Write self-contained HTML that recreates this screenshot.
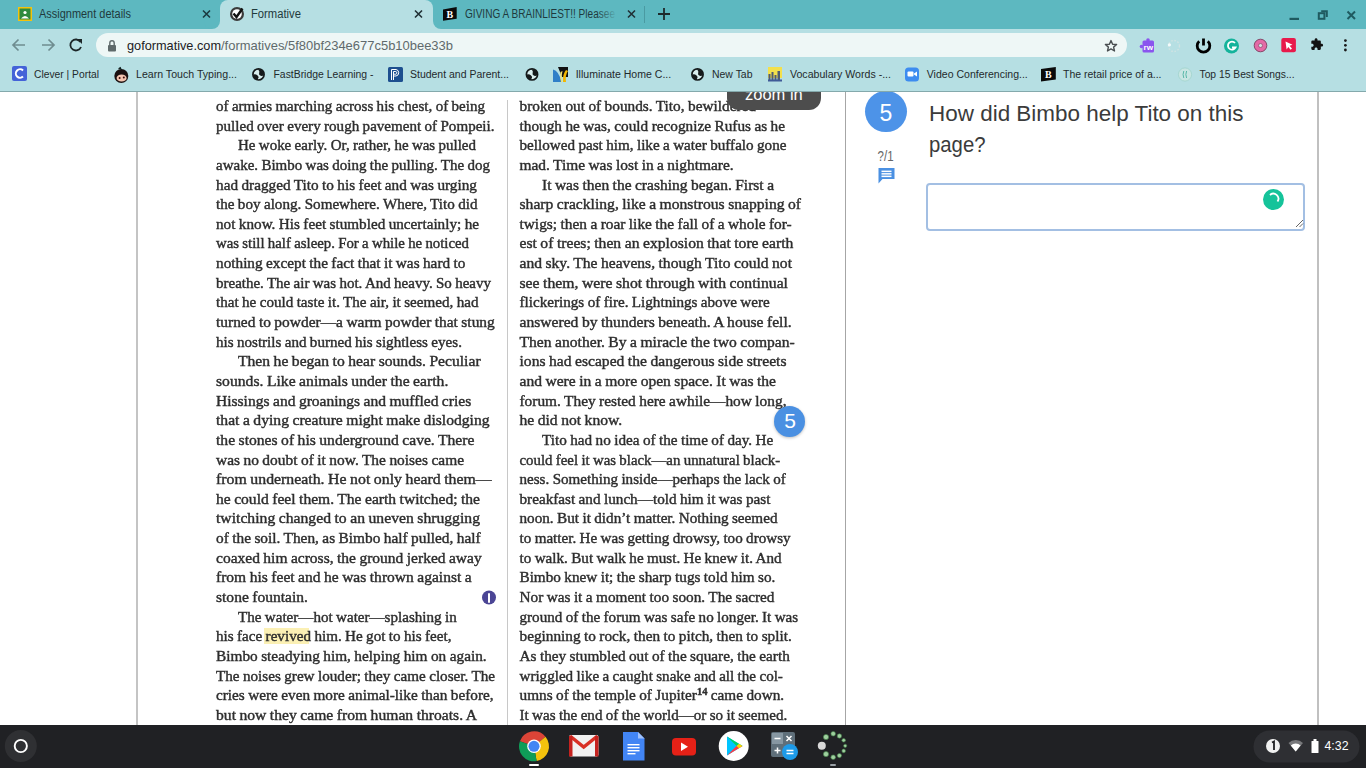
<!DOCTYPE html>
<html><head><meta charset="utf-8"><title>Formative</title>
<style>
html,body{margin:0;padding:0;}
body{width:1366px;height:768px;overflow:hidden;position:relative;background:#fff;font-family:"Liberation Sans",sans-serif;}
.a{position:absolute;}
svg{position:absolute;left:0;top:0;}
</style></head><body>

<!-- ============ CHROME FRAME ============ -->
<div class="a" style="left:0;top:0;width:1366px;height:29px;background:#5db8c0"></div>
<div class="a" style="left:0;top:29px;width:1366px;height:62px;background:#b6dfe3"></div>
<div class="a" style="left:0;top:91px;width:1366px;height:1px;background:#84a9ac"></div>
<!-- active tab -->
<div class="a" style="left:220px;top:0;width:213px;height:29px;background:#b6dfe3;border-radius:8px 8px 0 0"></div>
<div class="a" style="left:212px;top:21px;width:8px;height:8px;background:#b6dfe3"></div>
<div class="a" style="left:204px;top:13px;width:16px;height:16px;border-radius:50%;background:#5db8c0"></div>
<div class="a" style="left:433px;top:21px;width:8px;height:8px;background:#b6dfe3"></div>
<div class="a" style="left:433px;top:13px;width:16px;height:16px;border-radius:50%;background:#5db8c0"></div>
<!-- omnibox -->
<div class="a" style="left:96px;top:33px;width:1031px;height:24px;background:#eef7f6;border-radius:12px"></div>

<svg width="1366" height="92" viewBox="0 0 1366 92" style="font-family:'Liberation Sans',sans-serif">
  <!-- tab 1 -->
  <rect x="18" y="7" width="14" height="14" fill="#f4c20d"/>
  <rect x="19.5" y="8.5" width="11" height="11" fill="#2f8b3f"/>
  <circle cx="25" cy="12.5" r="1.6" fill="#fff"/>
  <path d="M21 18.5 Q25 13.5 29 18.5 Z" fill="#fff"/>
  <text x="39" y="18" font-size="12.5" fill="#1f3a3d" textLength="92" lengthAdjust="spacingAndGlyphs">Assignment details</text>
  <path d="M203 10.5 L210 17.5 M210 10.5 L203 17.5" stroke="#1c3a40" stroke-width="1.6"/>
  <!-- tab 2 (active) -->
  <circle cx="237" cy="14" r="7" fill="#3a3a3a"/>
  <circle cx="237" cy="14" r="4.8" fill="#fff"/>
  <path d="M233.5 13.5 L236.5 17 L242.5 8.5" stroke="#111" stroke-width="2.4" fill="none"/>
  <text x="251" y="18" font-size="12.5" fill="#1f3a3d" textLength="50" lengthAdjust="spacingAndGlyphs">Formative</text>
  <path d="M415 10.5 L422 17.5 M422 10.5 L415 17.5" stroke="#203035" stroke-width="1.6"/>
  <!-- tab 3 -->
  <path d="M443 9.5 L456.7 7 L456.7 18.8 L443 20.8 Z" fill="#0a0a0a"/>
  <text x="446.5" y="17.8" font-size="10" font-weight="bold" fill="#fff" font-family="Liberation Serif">B</text>
  <text x="465" y="18" font-size="12.5" fill="#1f3a3d" textLength="150" lengthAdjust="spacingAndGlyphs">GIVING A BRAINLIEST!! Pleasee</text>
  <defs><linearGradient id="fd" x1="0" x2="1"><stop offset="0" stop-color="#5db8c0" stop-opacity="0"/><stop offset="1" stop-color="#5db8c0" stop-opacity="1"/></linearGradient></defs>
  <rect x="597" y="6" width="20" height="16" fill="url(#fd)"/>
  <path d="M628 10.5 L635 17.5 M635 10.5 L628 17.5" stroke="#203035" stroke-width="1.6"/>
  <rect x="644" y="6" width="1" height="17" fill="#4a9aa2"/>
  <path d="M664 8 V20 M658 14 H670" stroke="#1d2a2c" stroke-width="1.8"/>
  <!-- window controls -->
  <rect x="1289.5" y="17.8" width="9.5" height="2.2" fill="#1f5a60"/>
  <rect x="1318.8" y="13.2" width="5.6" height="5.6" fill="none" stroke="#1f5a60" stroke-width="2"/>
  <path d="M1321.2 11.3 H1326.8 V16.9" fill="none" stroke="#1f5a60" stroke-width="2"/>
  <path d="M1347.5 11.5 L1355 19 M1355 11.5 L1347.5 19" stroke="#1f5a60" stroke-width="2"/>

  <!-- toolbar nav -->
  <path d="M13 45 H25 M18.5 39.5 L13 45 L18.5 50.5" fill="none" stroke="#6f8d90" stroke-width="1.7"/>
  <path d="M42 45 H54 M48.5 39.5 L54 45 L48.5 50.5" fill="none" stroke="#6f8d90" stroke-width="1.7"/>
  <path d="M80.5 42 A5.5 5.5 0 1 0 81 47" fill="none" stroke="#1c2628" stroke-width="1.8"/>
  <path d="M77 39 L82 39 L82 44 Z" fill="#1c2628"/>
  <!-- lock -->
  <rect x="108" y="45" width="8" height="6.5" rx="1" fill="#5f6a6b"/>
  <path d="M109.8 45.5 V43 A2.2 2.2 0 0 1 114.2 43 V45.5" fill="none" stroke="#5f6a6b" stroke-width="1.4"/>
  <text x="127" y="50" font-size="13" fill="#202124" textLength="94" lengthAdjust="spacingAndGlyphs">goformative.com</text>
  <text x="221" y="50" font-size="13" fill="#5f6a6c" textLength="232" lengthAdjust="spacingAndGlyphs">/formatives/5f80bf234e677c5b10bee33b</text>
  <!-- star -->
  <path d="M1111 40.6 L1112.6 44.2 L1116.6 44.5 L1113.6 47.1 L1114.5 51 L1111 48.9 L1107.5 51 L1108.4 47.1 L1105.4 44.5 L1109.4 44.2 Z" fill="none" stroke="#4a4f52" stroke-width="1.4" stroke-linejoin="round"/>
  <!-- extensions -->
  <rect x="1142.5" y="40.5" width="11.5" height="12" rx="1.5" fill="#8a55ee"/>
  <circle cx="1148" cy="40" r="1.8" fill="#8a55ee"/>
  <circle cx="1141.5" cy="46.5" r="1.8" fill="#8a55ee"/>
  <text x="1143.6" y="49.6" font-size="7.5" font-weight="bold" fill="#fff" textLength="9.5" lengthAdjust="spacingAndGlyphs">rw</text>
  <circle cx="1174" cy="46" r="5.5" fill="none" stroke="#cfe3e3" stroke-width="1.4" stroke-dasharray="1.6 1.6"/><circle cx="1169.4" cy="44.8" r="1.6" fill="#f4fbfb"/>
  <path d="M1199.2 41.2 A6.3 6.3 0 1 0 1207.8 41.2" fill="none" stroke="#000" stroke-width="2.8"/>
  <path d="M1203.5 38.5 V45.5" stroke="#000" stroke-width="2.8"/>
  <circle cx="1231.5" cy="46" r="7.5" fill="#14b39b"/>
  <path d="M1235 43 A4 4 0 1 0 1235.5 47.5 H1232" fill="none" stroke="#fff" stroke-width="1.8"/>
  <circle cx="1260.5" cy="45.5" r="6.3" fill="#e36aa6" stroke="#7d3d5e" stroke-width="0.9"/>
  <circle cx="1260.5" cy="45.5" r="2" fill="#d6dfe2" stroke="#7d3d5e" stroke-width="0.6"/>
  <rect x="1281.3" y="38" width="14.6" height="14.2" rx="2" fill="#e8194b"/>
  <path d="M1285.5 41.5 L1292.5 44.8 L1289.6 45.8 L1292 48.6 L1290.6 49.8 L1288.3 47 L1286.6 49.5 Z" fill="#fff"/>
  <path transform="translate(1310.2 37.6) scale(0.56)" d="M20.5 11H19V7c0-1.1-.9-2-2-2h-4V3.5C13 2.12 11.88 1 10.5 1S8 2.12 8 3.5V5H4c-1.1 0-1.99.9-1.99 2v3.8H3.5c1.490 0 2.7 1.21 2.7 2.7s-1.21 2.7-2.7 2.7H2V20c0 1.1.9 2 2 2h3.8v-1.5c0-1.49 1.21-2.7 2.7-2.7 1.49 0 2.7 1.21 2.7 2.7V22H17c1.1 0 2-.9 2-2v-4h1.5c1.38 0 2.5-1.12 2.5-2.5S21.88 11 20.5 11z" fill="#111"/>
  <circle cx="1345.4" cy="40.6" r="1.4" fill="#1a1a1a"/>
  <circle cx="1345.4" cy="45.3" r="1.4" fill="#1a1a1a"/>
  <circle cx="1345.4" cy="50" r="1.4" fill="#1a1a1a"/>

  <!-- bookmarks -->
  
  <rect x="12" y="66" width="15" height="15" rx="2" fill="#4463d8"/>
  <path d="M23 70.5 A4.2 4.2 0 1 0 23 76.5" fill="none" stroke="#fff" stroke-width="2"/>
  <text x="34" y="78" font-size="11.7" fill="#1f2a2c" textLength="65" lengthAdjust="spacingAndGlyphs">Clever | Portal</text>
  <circle cx="121.3" cy="76" r="7" fill="#1a1010"/>
  <path d="M118 68.5 L120.5 66.8 L122 70 Z" fill="#102020"/>
  <ellipse cx="121.6" cy="78" rx="5" ry="3.6" fill="#f3c4b0"/>
  <circle cx="119.6" cy="77.9" r="1" fill="#3a0c08"/>
  <circle cx="123.8" cy="77.6" r="1" fill="#3a0c08"/>
  <text x="136" y="78" font-size="11.7" fill="#1f2a2c" textLength="101" lengthAdjust="spacingAndGlyphs">Learn Touch Typing...</text>
  <g transform="translate(258.5 74.4)"><circle cx="0" cy="0" r="5.6" fill="#d9eeee" stroke="#151a1b" stroke-width="1.7"/>
  <path d="M-1.2 -5.2 Q1.6 -3.6 0.6 -1.4 Q0 0.6 2.2 1.4 Q4.2 1.8 5.4 0.6 L5.2 -2.5 Q3.5 -5.2 -1.2 -5.2 Z" fill="#151a1b"/>
  <path d="M-5.4 0.2 Q-3 -0.6 -1.2 0.8 Q0.4 2.2 0 3.4 Q-0.6 4.6 -1 5.4 Q-4.2 4.6 -5.4 1.5 Z" fill="#151a1b"/></g>
  <text x="273.5" y="78" font-size="11.7" fill="#1f2a2c" textLength="100" lengthAdjust="spacingAndGlyphs">FastBridge Learning -</text>
  <rect x="388" y="67" width="15" height="15" rx="1.5" fill="#1d4f8f"/>
  <path d="M391.5 80 V69.5 H396 A3.3 3.3 0 0 1 396 76 H393.5" fill="none" stroke="#fff" stroke-width="1"/>
  <path d="M393.5 80 V71.5 H395.8 A1.4 1.4 0 0 1 395.8 74.2 H393.5" fill="none" stroke="#fff" stroke-width="1"/>
  <text x="410" y="78" font-size="11.7" fill="#1f2a2c" textLength="99" lengthAdjust="spacingAndGlyphs">Student and Parent...</text>
  <g transform="translate(532 74.4)"><circle cx="0" cy="0" r="5.6" fill="#d9eeee" stroke="#151a1b" stroke-width="1.7"/>
  <path d="M-1.2 -5.2 Q1.6 -3.6 0.6 -1.4 Q0 0.6 2.2 1.4 Q4.2 1.8 5.4 0.6 L5.2 -2.5 Q3.5 -5.2 -1.2 -5.2 Z" fill="#151a1b"/>
  <path d="M-5.4 0.2 Q-3 -0.6 -1.2 0.8 Q0.4 2.2 0 3.4 Q-0.6 4.6 -1 5.4 Q-4.2 4.6 -5.4 1.5 Z" fill="#151a1b"/></g>
  <path d="M553 67 L568 67 L568 82 L553 82 Z" fill="#b6dfe3"/>
  <path d="M558 67 H568 V77 H562 Z" fill="#111"/>
  <path d="M553 69.5 Q559 71 561.5 82 H553 Z" fill="#2f7fc8"/>
  <path d="M563 82 Q562.5 74 566 70 L568 71 Q565 75 566 82 Z" fill="#f2b600"/>
  <path d="M560.5 72 L562.5 71 Q561 76 562 82 H561 Q560 77 560.5 72 Z" fill="#f7e26a"/>
  <text x="575.7" y="78" font-size="11.7" fill="#1f2a2c" textLength="95.5" lengthAdjust="spacingAndGlyphs">Illuminate Home C...</text>
  <g transform="translate(697.5 74.4)"><circle cx="0" cy="0" r="5.6" fill="#d9eeee" stroke="#151a1b" stroke-width="1.7"/>
  <path d="M-1.2 -5.2 Q1.6 -3.6 0.6 -1.4 Q0 0.6 2.2 1.4 Q4.2 1.8 5.4 0.6 L5.2 -2.5 Q3.5 -5.2 -1.2 -5.2 Z" fill="#151a1b"/>
  <path d="M-5.4 0.2 Q-3 -0.6 -1.2 0.8 Q0.4 2.2 0 3.4 Q-0.6 4.6 -1 5.4 Q-4.2 4.6 -5.4 1.5 Z" fill="#151a1b"/></g>
  <text x="712" y="78" font-size="11.7" fill="#1f2a2c" textLength="40.5" lengthAdjust="spacingAndGlyphs">New Tab</text>
  <rect x="768" y="67" width="14" height="11" fill="#f3e04c"/>
  <path d="M768.5 81 V74 h2 v7 M771.5 81 V72 h2 v9 M774.5 81 V75 h2 v6 M777.5 81 V71 h2.5 v10" fill="#4f5b73"/>
  <rect x="768" y="79.5" width="14" height="2" fill="#3f5a98"/>
  <text x="790" y="78" font-size="11.7" fill="#1f2a2c" textLength="101" lengthAdjust="spacingAndGlyphs">Vocabulary Words -...</text>
  <rect x="905" y="67.5" width="14" height="14" rx="3.5" fill="#3d8cf0"/>
  <rect x="907.5" y="71.5" width="6" height="5" rx="1" fill="#fff"/>
  <path d="M914 73.5 L917 71.5 V76.5 L914 74.5 Z" fill="#fff"/>
  <text x="926.8" y="78" font-size="11.7" fill="#1f2a2c" textLength="101" lengthAdjust="spacingAndGlyphs">Video Conferencing...</text>
  <path d="M1041 69 L1055.8 67 L1055.8 79.6 L1041 81.6 Z" fill="#0a0a0a"/>
  <text x="1045" y="78.3" font-size="10" font-weight="bold" fill="#fff" font-family="Liberation Serif">B</text>
  <text x="1063" y="78" font-size="11.7" fill="#1f2a2c" textLength="98.5" lengthAdjust="spacingAndGlyphs">The retail price of a...</text>
  <circle cx="1185" cy="74.5" r="6.6" fill="#c9e6e3" stroke="#9fd3cc" stroke-width="0.8"/>
  <path d="M1183.8 71 Q1182.3 74.5 1183.8 78 M1186.6 71 Q1185.1 74.5 1186.6 78" fill="none" stroke="#5ab8a8" stroke-width="1"/>
  <text x="1199.5" y="78" font-size="11.7" fill="#1f2a2c" textLength="95" lengthAdjust="spacingAndGlyphs">Top 15 Best Songs...</text>
</svg>

<!-- ============ PAGE ============ -->
<div class="a" style="left:136px;top:92px;width:2px;height:633px;background:#c4c4c4"></div>
<div class="a" style="left:845px;top:92px;width:1px;height:633px;background:#a6a6a6"></div>
<div class="a" style="left:1317px;top:92px;width:2px;height:633px;background:#c0c0c0"></div>
<div class="a" style="left:507px;top:100px;width:1px;height:625px;background:#c8c8c8"></div>
<!-- highlight revived -->
<div class="a" style="left:264px;top:628px;width:45px;height:16px;background:#fbf0b4"></div>

<svg width="1366" height="768" viewBox="0 0 1366 768" style="filter:blur(0.35px)">
<g font-family="Liberation Serif" font-size="15.3" word-spacing="-0.4" fill="#2e2e2e" stroke="#2e2e2e" stroke-width="0.42">
<text x="216" y="111.00" textLength="269.0" lengthAdjust="spacingAndGlyphs">of armies marching across his chest, of being</text>
<text x="216" y="130.64" textLength="278.5" lengthAdjust="spacingAndGlyphs">pulled over every rough pavement of Pompeii.</text>
<text x="238" y="150.28" textLength="238.0" lengthAdjust="spacingAndGlyphs">He woke early. Or, rather, he was pulled</text>
<text x="216" y="169.92" textLength="274.0" lengthAdjust="spacingAndGlyphs">awake. Bimbo was doing the pulling. The dog</text>
<text x="216" y="189.56" textLength="261.0" lengthAdjust="spacingAndGlyphs">had dragged Tito to his feet and was urging</text>
<text x="216" y="209.20" textLength="261.5" lengthAdjust="spacingAndGlyphs">the boy along. Somewhere. Where, Tito did</text>
<text x="216" y="228.84" textLength="263.0" lengthAdjust="spacingAndGlyphs">not know. His feet stumbled uncertainly; he</text>
<text x="216" y="248.48" textLength="253.0" lengthAdjust="spacingAndGlyphs">was still half asleep. For a while he noticed</text>
<text x="216" y="268.12" textLength="249.4" lengthAdjust="spacingAndGlyphs">nothing except the fact that it was hard to</text>
<text x="216" y="287.76" textLength="275.0" lengthAdjust="spacingAndGlyphs">breathe. The air was hot. And heavy. So heavy</text>
<text x="216" y="307.40" textLength="262.5" lengthAdjust="spacingAndGlyphs">that he could taste it. The air, it seemed, had</text>
<text x="216" y="327.04" textLength="278.8" lengthAdjust="spacingAndGlyphs">turned to powder—a warm powder that stung</text>
<text x="216" y="346.68" textLength="245.9" lengthAdjust="spacingAndGlyphs">his nostrils and burned his sightless eyes.</text>
<text x="238" y="366.32" textLength="242.6" lengthAdjust="spacingAndGlyphs">Then he began to hear sounds. Peculiar</text>
<text x="216" y="385.96" textLength="232.3" lengthAdjust="spacingAndGlyphs">sounds. Like animals under the earth.</text>
<text x="216" y="405.60" textLength="255.2" lengthAdjust="spacingAndGlyphs">Hissings and groanings and muffled cries</text>
<text x="216" y="425.24" textLength="273.6" lengthAdjust="spacingAndGlyphs">that a dying creature might make dislodging</text>
<text x="216" y="444.88" textLength="258.4" lengthAdjust="spacingAndGlyphs">the stones of his underground cave. There</text>
<text x="216" y="464.52" textLength="248.0" lengthAdjust="spacingAndGlyphs">was no doubt of it now. The noises came</text>
<text x="216" y="484.16" textLength="275.7" lengthAdjust="spacingAndGlyphs">from underneath. He not only heard them—</text>
<text x="216" y="503.80" textLength="264.0" lengthAdjust="spacingAndGlyphs">he could feel them. The earth twitched; the</text>
<text x="216" y="523.44" textLength="264.0" lengthAdjust="spacingAndGlyphs">twitching changed to an uneven shrugging</text>
<text x="216" y="543.08" textLength="264.6" lengthAdjust="spacingAndGlyphs">of the soil. Then, as Bimbo half pulled, half</text>
<text x="216" y="562.72" textLength="265.7" lengthAdjust="spacingAndGlyphs">coaxed him across, the ground jerked away</text>
<text x="216" y="582.36" textLength="255.7" lengthAdjust="spacingAndGlyphs">from his feet and he was thrown against a</text>
<text x="216" y="602.00" textLength="92.0" lengthAdjust="spacingAndGlyphs">stone fountain.</text>
<text x="238" y="621.64" textLength="218.7" lengthAdjust="spacingAndGlyphs">The water—hot water—splashing in</text>
<text x="216" y="641.28" textLength="235.5" lengthAdjust="spacingAndGlyphs">his face revived him. He got to his feet,</text>
<text x="216" y="660.92" textLength="270.7" lengthAdjust="spacingAndGlyphs">Bimbo steadying him, helping him on again.</text>
<text x="216" y="680.56" textLength="279.0" lengthAdjust="spacingAndGlyphs">The noises grew louder; they came closer. The</text>
<text x="216" y="700.20" textLength="277.6" lengthAdjust="spacingAndGlyphs">cries were even more animal-like than before,</text>
<text x="216" y="719.84" textLength="261.0" lengthAdjust="spacingAndGlyphs">but now they came from human throats. A</text>
<text x="519.5" y="111.00" textLength="236.5" lengthAdjust="spacingAndGlyphs">broken out of bounds. Tito, bewildered</text>
<text x="519.5" y="130.64" textLength="265.5" lengthAdjust="spacingAndGlyphs">though he was, could recognize Rufus as he</text>
<text x="519.5" y="150.28" textLength="267.0" lengthAdjust="spacingAndGlyphs">bellowed past him, like a water buffalo gone</text>
<text x="519.5" y="169.92" textLength="214.2" lengthAdjust="spacingAndGlyphs">mad. Time was lost in a nightmare.</text>
<text x="542" y="189.56" textLength="232.0" lengthAdjust="spacingAndGlyphs">It was then the crashing began. First a</text>
<text x="519.5" y="209.20" textLength="281.5" lengthAdjust="spacingAndGlyphs">sharp crackling, like a monstrous snapping of</text>
<text x="519.5" y="228.84" textLength="272.2" lengthAdjust="spacingAndGlyphs">twigs; then a roar like the fall of a whole for-</text>
<text x="519.5" y="248.48" textLength="273.8" lengthAdjust="spacingAndGlyphs">est of trees; then an explosion that tore earth</text>
<text x="519.5" y="268.12" textLength="272.5" lengthAdjust="spacingAndGlyphs">and sky. The heavens, though Tito could not</text>
<text x="519.5" y="287.76" textLength="268.5" lengthAdjust="spacingAndGlyphs">see them, were shot through with continual</text>
<text x="519.5" y="307.40" textLength="250.3" lengthAdjust="spacingAndGlyphs">flickerings of fire. Lightnings above were</text>
<text x="519.5" y="327.04" textLength="272.2" lengthAdjust="spacingAndGlyphs">answered by thunders beneath. A house fell.</text>
<text x="519.5" y="346.68" textLength="275.3" lengthAdjust="spacingAndGlyphs">Then another. By a miracle the two compan-</text>
<text x="519.5" y="366.32" textLength="267.0" lengthAdjust="spacingAndGlyphs">ions had escaped the dangerous side streets</text>
<text x="519.5" y="385.96" textLength="256.5" lengthAdjust="spacingAndGlyphs">and were in a more open space. It was the</text>
<text x="519.5" y="405.60" textLength="267.0" lengthAdjust="spacingAndGlyphs">forum. They rested here awhile—how long,</text>
<text x="519.5" y="425.24" textLength="102.7" lengthAdjust="spacingAndGlyphs">he did not know.</text>
<text x="542" y="444.88" textLength="231.3" lengthAdjust="spacingAndGlyphs">Tito had no idea of the time of day. He</text>
<text x="519.5" y="464.52" textLength="260.7" lengthAdjust="spacingAndGlyphs">could feel it was black—an unnatural black-</text>
<text x="519.5" y="484.16" textLength="266.3" lengthAdjust="spacingAndGlyphs">ness. Something inside—perhaps the lack of</text>
<text x="519.5" y="503.80" textLength="250.9" lengthAdjust="spacingAndGlyphs">breakfast and lunch—told him it was past</text>
<text x="519.5" y="523.44" textLength="258.0" lengthAdjust="spacingAndGlyphs">noon. But it didn’t matter. Nothing seemed</text>
<text x="519.5" y="543.08" textLength="271.1" lengthAdjust="spacingAndGlyphs">to matter. He was getting drowsy, too drowsy</text>
<text x="519.5" y="562.72" textLength="262.1" lengthAdjust="spacingAndGlyphs">to walk. But walk he must. He knew it. And</text>
<text x="519.5" y="582.36" textLength="255.8" lengthAdjust="spacingAndGlyphs">Bimbo knew it; the sharp tugs told him so.</text>
<text x="519.5" y="602.00" textLength="255.0" lengthAdjust="spacingAndGlyphs">Nor was it a moment too soon. The sacred</text>
<text x="519.5" y="621.64" textLength="278.7" lengthAdjust="spacingAndGlyphs">ground of the forum was safe no longer. It was</text>
<text x="519.5" y="641.28" textLength="272.3" lengthAdjust="spacingAndGlyphs">beginning to rock, then to pitch, then to split.</text>
<text x="519.5" y="660.92" textLength="270.3" lengthAdjust="spacingAndGlyphs">As they stumbled out of the square, the earth</text>
<text x="519.5" y="680.56" textLength="263.4" lengthAdjust="spacingAndGlyphs">wriggled like a caught snake and all the col-</text>
<text x="519.5" y="700.20" textLength="264.7" lengthAdjust="spacingAndGlyphs">umns of the temple of Jupiter<tspan font-size="10.5" dy="-5.5" font-weight="bold">14</tspan><tspan dy="5.5"> </tspan>came down.</text>
<text x="519.5" y="719.84" textLength="267.7" lengthAdjust="spacingAndGlyphs">It was the end of the world—or so it seemed.</text>
</g>
</svg>

<!-- zoom in pill -->
<div class="a" style="left:727px;top:92px;width:94px;height:18px;overflow:hidden">
  <div class="a" style="left:0;top:-12px;width:94px;height:29.5px;background:#4d4d4d;border-radius:0 0 12px 12px;"></div>
  <div class="a" style="left:18px;top:-8.5px;width:60px;color:#fff;font-size:16.5px;line-height:20px;white-space:nowrap">zoom in</div>
</div>
<!-- blue 5 marker in doc -->
<div class="a" style="left:774px;top:406px;width:31px;height:31px;border-radius:50%;background:#4a90e2;box-shadow:0 1px 3px rgba(0,0,0,.25)"></div>
<div class="a" style="left:774.5px;top:409px;width:31px;text-align:center;color:#fff;font-size:21px;line-height:24px">5</div>
<!-- info icon -->
<svg width="1366" height="768" viewBox="0 0 1366 768">
  <circle cx="489" cy="597.5" r="7" fill="#4b4595"/>
  <rect x="488" y="593" width="2" height="10" rx="1" fill="#fff"/>
</svg>

<!-- ============ QUESTION PANEL ============ -->
<div class="a" style="left:865.2px;top:91px;width:41.4px;height:41.4px;border-radius:50%;background:#4d93e8"></div>
<div class="a" style="left:865px;top:98.6px;width:42px;text-align:center;color:#fff;font-size:23px;line-height:28px">5</div>

<svg width="1366" height="768" viewBox="0 0 1366 768">
  <text x="877.6" y="161.2" font-size="15" fill="#666" textLength="16" lengthAdjust="spacingAndGlyphs" font-family="Liberation Sans">?/1</text>
  <path d="M878.5 168 H894.5 V179 H882.5 L878.5 183.5 Z" fill="#4a90e2"/>
  <rect x="881.5" y="170.6" width="10" height="1.5" fill="#fff"/>
  <rect x="881.5" y="173.1" width="10" height="1.5" fill="#fff"/>
  <rect x="881.5" y="175.6" width="10" height="1.5" fill="#fff"/>
</svg>
<svg width="1366" height="768" viewBox="0 0 1366 768" style="font-family:'Liberation Sans',sans-serif">
  <text x="929" y="120.7" font-size="22" fill="#3b3b3b" textLength="314.5" lengthAdjust="spacingAndGlyphs">How did Bimbo help Tito on this</text>
  <text x="929" y="151.8" font-size="22" fill="#3b3b3b" textLength="56.5" lengthAdjust="spacingAndGlyphs">page?</text>
</svg>
<div class="a" style="left:926px;top:183px;width:379px;height:48px;box-sizing:border-box;border:2px solid #a3bfe3;border-radius:4px;background:#fff"></div>
<svg width="1366" height="768" viewBox="0 0 1366 768">
  <circle cx="1273.5" cy="199.5" r="10.5" fill="#15c39a"/>
  <path d="M1270 195 A5 5 0 0 1 1277.5 201.5" fill="none" stroke="#fff" stroke-width="1.8"/>
  <path d="M1296 227 L1303 220 M1299.5 227 L1303 223.5" stroke="#666" stroke-width="1"/>
</svg>

<!-- ============ SHELF ============ -->
<div class="a" style="left:0;top:725px;width:1366px;height:43px;background:#202124"></div>
<svg width="1366" height="768" viewBox="0 0 1366 768" style="font-family:'Liberation Sans',sans-serif">
  <circle cx="20.8" cy="746" r="16" fill="#2f3033"/>
  <circle cx="20.8" cy="746" r="6.1" fill="none" stroke="#fff" stroke-width="1.9"/>
  <!-- chrome -->
  <path d="M534 746.3 L519.90 741.17 A15 15 0 0 1 545.49 736.66 Z" fill="#db4437"/>
  <path d="M534 746.3 L545.49 736.66 A15 15 0 0 1 536.60 761.07 Z" fill="#f4c20d"/>
  <path d="M534 746.3 L536.60 761.07 A15 15 0 0 1 519.90 741.17 Z" fill="#0f9d58"/>
  <circle cx="534" cy="746.3" r="6.8" fill="#fff"/>
  <circle cx="534" cy="746.3" r="5.5" fill="#4285f4"/>
  <rect x="529" y="764" width="10" height="2" rx="1" fill="#fff"/>
  <!-- gmail -->
  <rect x="569" y="735" width="29.5" height="21.5" rx="2" fill="#f1f1f1"/>
  <path d="M570 736 L583.7 747 L597.5 736" fill="none" stroke="#d93025" stroke-width="3.5"/>
  <rect x="569" y="736" width="3.5" height="20.5" fill="#c5221f"/>
  <rect x="595" y="736" width="3.5" height="20.5" fill="#c5221f"/>
  <!-- docs -->
  <path d="M623 732 H638 L644.5 738.5 V760.5 H623 Z" fill="#4285f4"/>
  <path d="M638 732 V738.5 H644.5 Z" fill="#a1c2fa"/>
  <rect x="627.5" y="744" width="12" height="1.4" fill="#fff"/>
  <rect x="627.5" y="747" width="12" height="1.4" fill="#fff"/>
  <rect x="627.5" y="750" width="12" height="1.4" fill="#fff"/>
  <rect x="627.5" y="753" width="8" height="1.4" fill="#fff"/>
  <!-- youtube -->
  <rect x="672" y="738" width="24" height="17.5" rx="4" fill="#e62117"/>
  <path d="M681 742.5 L688 746.7 L681 751 Z" fill="#fff"/>
  <!-- play -->
  <circle cx="733.7" cy="746" r="15" fill="#fff"/>
  <path d="M727 736.5 L742.5 746 L727 755.5 Z" fill="#00c4ff"/>
  <path d="M727 736.5 L736.5 746 L742.5 746 Z" fill="#00d26a"/>
  <path d="M727 755.5 L736.5 746 L742.5 746 Z" fill="#ff3a44"/>
  <path d="M736.5 746 L739 743.8 L742.5 746 L739 748.2 Z" fill="#ffd400"/>
  <!-- calculator -->
  <rect x="771" y="732" width="24" height="25" rx="2" fill="#5f6f7a"/>
  <rect x="772" y="733" width="11" height="11" fill="#8797a2"/>
  <path d="M774.5 738.5 H780.5" stroke="#fff" stroke-width="1.5"/>
  <path d="M786.5 736 L791.5 741 M791.5 736 L786.5 741" stroke="#fff" stroke-width="1.5"/>
  <path d="M774.5 750.5 H780.5 M777.5 747.5 V753.5" stroke="#fff" stroke-width="1.5"/>
  <circle cx="790" cy="752" r="8" fill="#1e9be9"/>
  <path d="M786.5 750.5 H793.5 M786.5 753.5 H793.5" stroke="#fff" stroke-width="1.5"/>
  <!-- loading -->
  <g fill="#9fcf9f" stroke="#3f7f45" stroke-width="0.6">
    <circle cx="826" cy="737" r="2.6"/><circle cx="833.2" cy="733.8" r="2.3"/><circle cx="839.4" cy="736" r="2.2"/>
    <circle cx="843.7" cy="740.3" r="1.8"/><circle cx="845.2" cy="745.8" r="1.6"/><circle cx="843.7" cy="750.9" r="1.8"/>
    <circle cx="839.4" cy="755.6" r="2.1"/><circle cx="833.2" cy="757.2" r="2.3"/><circle cx="826" cy="754.1" r="2.6"/>
  </g>
  <circle cx="821.8" cy="745.8" r="4" fill="#d9d9d9"/>
  <rect x="830" y="764" width="6" height="2" rx="1" fill="#9aa0a6"/>
  <!-- status area -->
  <rect x="1253.5" y="730.5" width="106" height="32" rx="16" fill="#2e2f33"/>
  <circle cx="1273" cy="746" r="7" fill="#f1f1f1"/>
  <path d="M1272 742.5 L1274 741.5 V750" stroke="#202124" stroke-width="1.8" fill="none"/>
  <path d="M1288.5 743 A10.5 10.5 0 0 1 1303 743 L1295.7 751.5 Z" fill="#77787b"/><path d="M1290.8 745.6 A7 7 0 0 1 1300.6 745.6 L1295.7 751.5 Z" fill="#fff"/>
  <rect x="1313.5" y="739" width="3" height="2" fill="#fff"/>
  <rect x="1311.5" y="741" width="7" height="12" rx="0.5" fill="#fff"/>
  <text x="1324.5" y="750.3" font-size="13" fill="#fff" textLength="24" lengthAdjust="spacingAndGlyphs">4:32</text>
</svg>
<div class="a" style="left:840px;top:91px;width:80px;height:1px;background:#84a9ac"></div>
</body></html>
